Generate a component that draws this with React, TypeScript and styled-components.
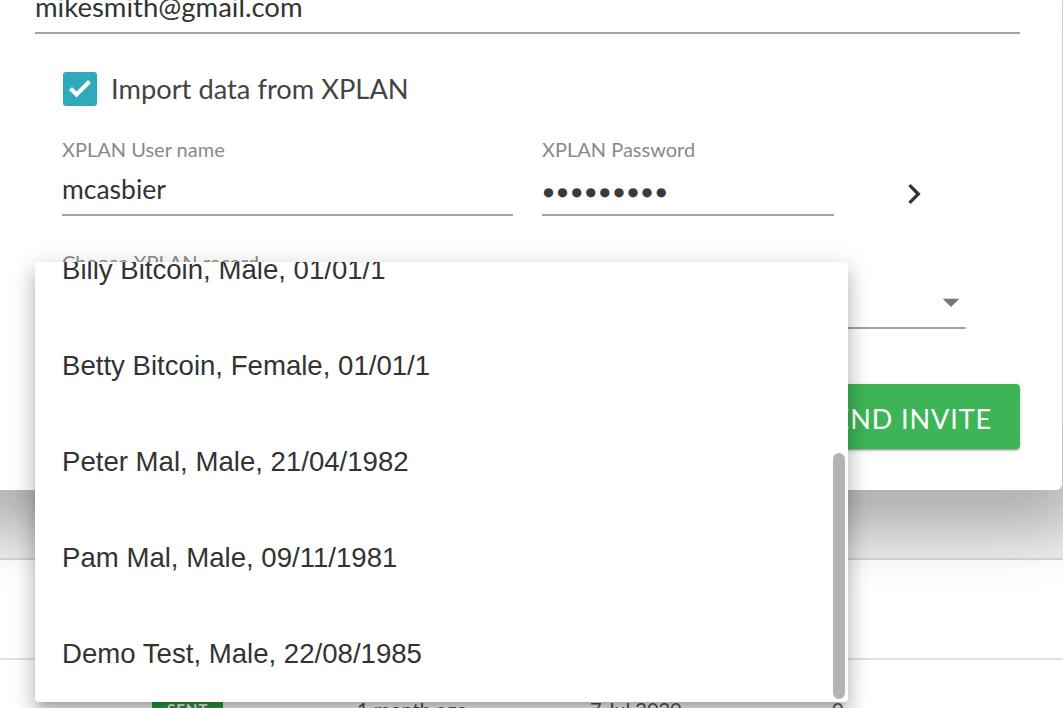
import React, { useLayoutEffect, useRef, useState } from "react";
import styled, { createGlobalStyle } from "styled-components";

const GlobalStyle = createGlobalStyle`
  * { box-sizing: border-box; }
  html, body {
    margin: 0;
    padding: 0;
    overflow: hidden;
    background: #ffffff;
  }
  body {
    font-family: Lato, "Noto Sans", Arial, sans-serif;
    color: #333333;
  }
`;

const records = [
  "Mike Smith, Male, 12/03/1975",
  "Jane Smith, Female, 04/06/1978",
  "John Citizen, Male, 01/01/1970",
  "Billy Bitcoin, Male, 01/01/1",
  "Betty Bitcoin, Female, 01/01/1",
  "Peter Mal, Male, 21/04/1982",
  "Pam Mal, Male, 09/11/1981",
  "Demo Test, Male, 22/08/1985",
];

const invites = [
  { status: "SENT", ago: "2 months ago", date: "12 Jun 2020", docs: "0" },
  { status: "SENT", ago: "1 month ago", date: "7 Jul 2020", docs: "0" },
];

/* ---------- page behind the dialog ---------- */

const Page = styled.div`
  position: relative;
  width: 1063px;
  height: 708px;
  padding-top: 430px;
`;

const Table = styled.div`
  display: flex;
  flex-direction: column;
`;

const HeadRow = styled.div`
  height: 130px;
  background: #eeeeee;
  border-bottom: 2px solid #d6d6d6;
`;

const Row = styled.div`
  display: grid;
  grid-template-columns: 205px 233px 242px 1fr;
  align-items: center;
  height: 100px;
  padding-left: 152px;
  border-bottom: 2px solid #e2e2e2;
  font-size: 20px;
  color: #555555;
`;

const Badge = styled.span`
  justify-self: start;
  display: inline-flex;
  align-items: center;
  height: 24px;
  padding: 0 15px;
  background: #2f9e44;
  color: #ffffff;
  font-size: 15px;
  font-weight: 700;
  letter-spacing: 1px;
  border-radius: 2px;
`;

/* ---------- dialog ---------- */

const Dialog = styled.div`
  position: absolute;
  top: -60px;
  left: -20px;
  width: 1082px;
  padding: 10px 42px 41px 55px;
  background: #ffffff;
  border-radius: 6px;
  box-shadow: 0 20px 50px 20px rgba(0, 0, 0, 0.2),
    0 40px 80px 0 rgba(0, 0, 0, 0.08);
  z-index: 2;
`;

const Field = styled.div<{ $width?: number; $gap?: number }>`
  display: flex;
  flex-direction: column;
  width: ${(p) => (p.$width ? `${p.$width}px` : "100%")};
  margin-left: ${(p) => p.$gap ?? 0}px;
`;

const FieldLabel = styled.div`
  height: 24px;
  font-size: 20px;
  line-height: 24px;
  color: #8a8a8a;
`;

const FieldValue = styled.div<{ $gapTop?: number; $size?: number }>`
  display: flex;
  align-items: center;
  height: 47px;
  margin-top: ${(p) => p.$gapTop ?? 8}px;
  padding-bottom: 5px;
  border-bottom: 2px solid #a3a3a3;
  font-size: ${(p) => p.$size ?? 26.5}px;
  line-height: 40px;
  color: #333333;
`;

const Dots = styled.span`
  font-family: "Liberation Sans", Arial, sans-serif;
  font-size: 21.5px;
  letter-spacing: 1.1px;
  padding-top: 6px;
  color: #3a3a3a;
`;

const CheckRow = styled.label`
  display: flex;
  align-items: center;
  gap: 14px;
  height: 34px;
  margin: 38px 0 0 28px;
  font-size: 27.3px;
  line-height: 34px;
  color: #444444;
`;

const Xplan = styled.div`
  display: flex;
  flex-direction: column;
  padding: 0 54px 0 27px;
`;

const FieldsRow = styled.div`
  display: flex;
  align-items: flex-end;
  margin-top: 31px;
`;

const IconButton = styled.button`
  display: flex;
  align-items: center;
  justify-content: center;
  width: 40px;
  height: 40px;
  margin: 0 0 2px 60px;
  padding: 0;
  border: none;
  background: transparent;
  color: #333333;
`;

const SelectField = styled(Field)`
  margin-top: 34px;
`;

const SelectValue = styled(FieldValue)`
  justify-content: flex-end;
  svg {
    margin-right: -5px;
  }
`;

const Actions = styled.div`
  display: flex;
  justify-content: flex-end;
  margin-top: 55px;
`;

const InviteButton = styled.button`
  height: 65px;
  padding: 3px 28px 0;
  border: none;
  border-radius: 4px;
  background: #3db556;
  color: #ffffff;
  font-family: Lato, "Noto Sans", Arial, sans-serif;
  font-size: 27px;
  letter-spacing: 0.9px;
  text-transform: uppercase;
  box-shadow: 0 3px 1px -2px rgba(0, 0, 0, 0.2), 0 2px 2px 0 rgba(0, 0, 0, 0.14),
    0 1px 5px 0 rgba(0, 0, 0, 0.12);
`;

/* ---------- record menu (popover) ---------- */

const Menu = styled.div`
  position: absolute;
  top: 262px;
  left: 35px;
  width: 813px;
  height: 440px;
  background: #ffffff;
  border-radius: 4px;
  box-shadow: 0 8px 8px -5px rgba(0, 0, 0, 0.2), 0 13px 17px 2px rgba(0, 0, 0, 0.14),
    0 5px 23px 4px rgba(0, 0, 0, 0.12);
  overflow: hidden;
  z-index: 3;
`;

const MenuList = styled.ul`
  height: 100%;
  margin: 0;
  padding: 0;
  list-style: none;
  overflow-y: auto;
  scrollbar-width: none;
  &::-webkit-scrollbar {
    display: none;
  }
`;

const MenuItem = styled.li`
  display: flex;
  align-items: center;
  height: 96px;
  padding-left: 27px;
  font-family: "Liberation Sans", Arial, sans-serif;
  font-size: 27.6px;
  color: #333333;
  white-space: nowrap;
`;

const Thumb = styled.div`
  position: absolute;
  right: 3px;
  width: 12px;
  background: #b3b3b3;
  border-radius: 6px;
`;

const RecordMenu: React.FC = () => {
  const listRef = useRef<HTMLUListElement>(null);
  const [thumb, setThumb] = useState({ top: 0, height: 0 });

  const measure = () => {
    const el = listRef.current;
    if (!el) return;
    const { scrollTop, scrollHeight, clientHeight } = el;
    setThumb({
      top: (scrollTop / scrollHeight) * clientHeight,
      height: (clientHeight * clientHeight) / scrollHeight,
    });
  };

  useLayoutEffect(() => {
    const el = listRef.current;
    if (el) el.scrollTop = el.scrollHeight;
    measure();
  }, []);

  return (
    <Menu>
      <MenuList ref={listRef} onScroll={measure}>
        {records.map((r) => (
          <MenuItem key={r}>{r}</MenuItem>
        ))}
      </MenuList>
      <Thumb style={{ top: thumb.top + 3, height: Math.max(thumb.height - 6, 0) }} />
    </Menu>
  );
};

const CheckIcon = () => (
  <svg width="34" height="34" viewBox="0 0 34 34">
    <rect width="34" height="34" rx="3" fill="#2fa9bc" />
    <polyline
      points="7.5,16.5 13.5,22.5 26.5,9.5"
      fill="none"
      stroke="#ffffff"
      strokeWidth="4.2"
    />
  </svg>
);

const ChevronRight = () => (
  <svg width="40" height="40" viewBox="0 0 24 24" fill="currentColor">
    <path d="M10 6 8.59 7.41 13.17 12l-4.58 4.59L10 18l6-6z" />
  </svg>
);

const ArrowDropDown = () => (
  <svg width="40" height="40" viewBox="0 0 24 24" fill="#777777">
    <path d="M7 10l5 5 5-5z" />
  </svg>
);

const App: React.FC = () => {
  return (
    <>
      <GlobalStyle />
      <Page>
        <Table>
          <HeadRow />
          {invites.map((row) => (
            <Row key={row.date}>
              <Badge>{row.status}</Badge>
              <span>{row.ago}</span>
              <span>{row.date}</span>
              <span>{row.docs}</span>
            </Row>
          ))}
        </Table>

        <Dialog>
          <Field>
            <FieldLabel>Email</FieldLabel>
            <FieldValue $gapTop={13} $size={27.5}>
              mikesmith@gmail.com
            </FieldValue>
          </Field>

          <CheckRow>
            <CheckIcon />
            Import data from XPLAN
          </CheckRow>

          <Xplan>
            <FieldsRow>
              <Field $width={451}>
                <FieldLabel>XPLAN User name</FieldLabel>
                <FieldValue>mcasbier</FieldValue>
              </Field>
              <Field $width={292} $gap={29}>
                <FieldLabel>XPLAN Password</FieldLabel>
                <FieldValue>
                  <Dots>●●●●●●●●●</Dots>
                </FieldValue>
              </Field>
              <IconButton>
                <ChevronRight />
              </IconButton>
            </FieldsRow>

            <SelectField>
              <FieldLabel>Choose XPLAN record</FieldLabel>
              <SelectValue>
                <ArrowDropDown />
              </SelectValue>
            </SelectField>
          </Xplan>

          <Actions>
            <InviteButton>Send invite</InviteButton>
          </Actions>
        </Dialog>

        <RecordMenu />
      </Page>
    </>
  );
};

export default App;
